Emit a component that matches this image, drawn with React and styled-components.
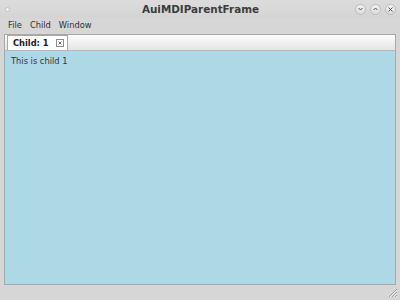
import React from 'react';
import styled, { createGlobalStyle } from 'styled-components';

const Global = createGlobalStyle`
    html, body {
        margin: 0;
        padding: 0;
        background: #d6d6d6;
    }
    body {
        font-family: "DejaVu Sans", "Liberation Sans", sans-serif;
    }
`;

const Frame = styled.div`
    width: 400px;
    height: 300px;
    display: flex;
    flex-direction: column;
    background: #d6d6d6;
    overflow: hidden;
`;

const TitleBar = styled.div`
    height: 18px;
    display: flex;
    align-items: center;
    padding: 0 4px 0 5px;
    background: linear-gradient(#dcdcdc, #d4d4d4);
`;

const Dot = styled.span`
    width: 5px;
    height: 5px;
    border-radius: 50%;
    background: #f4f4f4;
    border: 1px solid #c0c0c0;
    box-sizing: border-box;
`;

const Title = styled.div`
    flex: 1;
    text-align: center;
    font-size: 10.4px;
    font-weight: bold;
    color: #3c3c3c;
    padding-left: 36px;
`;

const WinButtons = styled.div`
    display: flex;
    gap: 4px;
`;

const WinButton = styled.span`
    width: 11px;
    height: 11px;
    border-radius: 50%;
    border: 1px solid #bcbcbc;
    background: linear-gradient(#f2f2f2, #dcdcdc);
    box-sizing: border-box;
    display: flex;
    align-items: center;
    justify-content: center;
    svg { display: block; }
`;

const MenuBar = styled.div`
    height: 14px;
    display: flex;
    align-items: center;
    gap: 8px;
    padding: 0 8px;
    font-size: 8.3px;
    color: #303030;
`;

const Notebook = styled.div`
    flex: 1;
    display: flex;
    flex-direction: column;
    margin: 2px 4px 0 4px;
`;

const TabStrip = styled.div`
    height: 15px;
    display: flex;
    align-items: flex-end;
    padding-left: 2px;
    border: 1px solid #a8a8a8;
    border-bottom: none;
    background: linear-gradient(#fdfdfd, #e4e4e4);
`;

const Tab = styled.div`
    height: 14px;
    display: flex;
    align-items: center;
    gap: 7px;
    padding: 0 3px 0 5px;
    background: #fff;
    border: 1px solid #a8a8a8;
    border-bottom: none;
    font-size: 8.3px;
    font-weight: bold;
    color: #202020;
`;

const CloseBox = styled.span`
    width: 8px;
    height: 8px;
    border: 1px solid #8a8a8a;
    box-sizing: border-box;
    display: flex;
    align-items: center;
    justify-content: center;
    svg { display: block; }
`;

const Page = styled.div`
    flex: 1;
    background: #add8e6;
    border: 1px solid #a8a8a8;
    border-top-color: #b8b8b8;
    padding: 5px 6px;
    font-size: 8.3px;
    color: #333;
`;

const StatusBar = styled.div`
    height: 15px;
    display: flex;
    justify-content: flex-end;
    align-items: flex-end;
    padding: 0 2px 2px 0;
    box-sizing: border-box;
`;

const Chevron = ({ up }) => (
    <svg width="5" height="4" viewBox="0 0 5 4">
        <path d={up ? 'M0.5 3L2.5 1L4.5 3' : 'M0.5 1L2.5 3L4.5 1'} fill="none" stroke="#555" strokeWidth="1" />
    </svg>
);

const Grip = () => (
    <svg width="11" height="11" viewBox="0 0 11 11">
        <path d="M10 2L2 10M10 5L5 10M10 8L8 10" stroke="#9a9a9a" strokeWidth="1" />
        <path d="M10 3L3 10M10 6L6 10M10 9L9 10" stroke="#f4f4f4" strokeWidth="1" />
    </svg>
);

export default function App() {
    return (
        <>
            <Global />
            <Frame>
                <TitleBar>
                    <Dot />
                    <Title>AuiMDIParentFrame</Title>
                    <WinButtons>
                        <WinButton><Chevron /></WinButton>
                        <WinButton><Chevron up /></WinButton>
                        <WinButton>
                            <svg width="5" height="5" viewBox="0 0 5 5">
                                <path d="M0.5 0.5L4.5 4.5M4.5 0.5L0.5 4.5" stroke="#555" strokeWidth="1" />
                            </svg>
                        </WinButton>
                    </WinButtons>
                </TitleBar>
                <MenuBar>
                    <span>File</span>
                    <span>Child</span>
                    <span>Window</span>
                </MenuBar>
                <Notebook>
                    <TabStrip>
                        <Tab>
                            Child: 1
                            <CloseBox>
                                <svg width="4" height="4" viewBox="0 0 4 4">
                                    <path d="M0.5 0.5L3.5 3.5M3.5 0.5L0.5 3.5" stroke="#666" strokeWidth="0.9" />
                                </svg>
                            </CloseBox>
                        </Tab>
                    </TabStrip>
                    <Page>This is child 1</Page>
                </Notebook>
                <StatusBar><Grip /></StatusBar>
            </Frame>
        </>
    );
}
